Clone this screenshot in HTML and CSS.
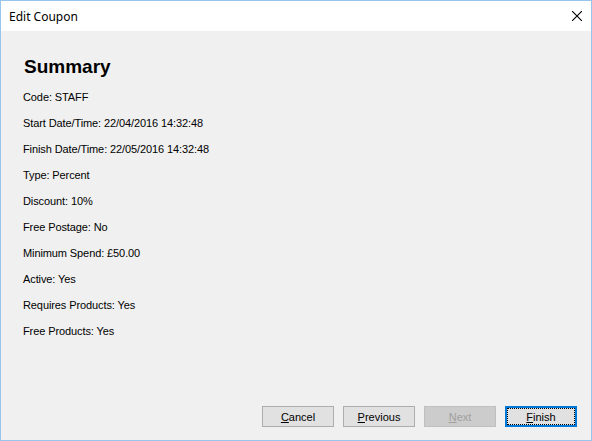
FILE: index.html
```html
<!DOCTYPE html>
<html>
<head>
<meta charset="utf-8">
<link rel="stylesheet" href="styles.css">
</head>
<body>
<div class="window">
  <div class="titlebar">
    <span class="title">Edit Coupon</span>
    <svg class="close" width="10" height="10" viewBox="0 0 10 10"><path d="M0 0L10 10M10 0L0 10" stroke="#000" stroke-width="1.1" fill="none"/></svg>
  </div>
  <div class="content">
    <h1 class="heading">Summary</h1>
    <div class="lines">
      <div class="line">Code: STAFF</div>
      <div class="line">Start Date/Time: 22/04/2016 14:32:48</div>
      <div class="line">Finish Date/Time: 22/05/2016 14:32:48</div>
      <div class="line">Type: Percent</div>
      <div class="line">Discount: 10%</div>
      <div class="line">Free Postage: No</div>
      <div class="line">Minimum Spend: £50.00</div>
      <div class="line">Active: Yes</div>
      <div class="line">Requires Products: Yes</div>
      <div class="line">Free Products: Yes</div>
    </div>
    <div class="buttons">
      <button class="btn"><u>C</u>ancel</button>
      <button class="btn"><u>P</u>revious</button>
      <button class="btn btn-disabled"><u>N</u>ext</button>
      <button class="btn btn-focus"><u>F</u>inish</button>
    </div>
  </div>
</div>
</body>
</html>
```
FILE: styles.css
```css
html, body {
  margin: 0;
  padding: 0;
  background: #f0f0f0;
}
.window {
  width: 592px;
  height: 441px;
  box-sizing: border-box;
  border: 1px solid #99c4ec;
  display: flex;
  flex-direction: column;
  background: #f0f0f0;
}
.titlebar {
  height: 30px;
  background: #ffffff;
  display: flex;
  align-items: center;
  justify-content: space-between;
  padding: 0 9px 0 8px;
  flex: none;
}
.title {
  font-family: "Noto Sans", "Open Sans", sans-serif;
  font-size: 12px;
  color: #000;
}
.close {
  display: block;
  margin-top: -1px;
}
.content {
  flex: 1;
  display: flex;
  flex-direction: column;
  padding: 25px 14px 13px 22px;
}
.heading {
  margin: 0 0 6px 1px;
  font-family: "Liberation Sans", Arial, sans-serif;
  font-weight: bold;
  font-size: 19px;
  line-height: 22px;
  color: #000;
}
.lines {
  display: flex;
  flex-direction: column;
}
.line {
  font-family: "Liberation Sans", Arial, sans-serif;
  font-size: 11px;
  line-height: 26px;
  height: 26px;
  color: #000;
  letter-spacing: -0.1px;
}
.buttons {
  margin-top: auto;
  display: flex;
  justify-content: flex-end;
  gap: 9px;
}
.btn {
  width: 72px;
  height: 21px;
  box-sizing: border-box;
  margin: 0;
  padding: 0;
  background: #e1e1e1;
  border: 1px solid #adadad;
  border-radius: 0;
  font-family: "Liberation Sans", Arial, sans-serif;
  font-size: 11px;
  color: #000;
  display: flex;
  align-items: center;
  justify-content: center;
}
.btn u {
  text-decoration: underline;
}
.btn-disabled {
  background: #cccccc;
  border-color: #bfbfbf;
  color: #a0a0a0;
}
.btn-focus {
  border: 2px solid #0078d7;
  outline: 1px dotted #000;
  outline-offset: -3px;
}
```
